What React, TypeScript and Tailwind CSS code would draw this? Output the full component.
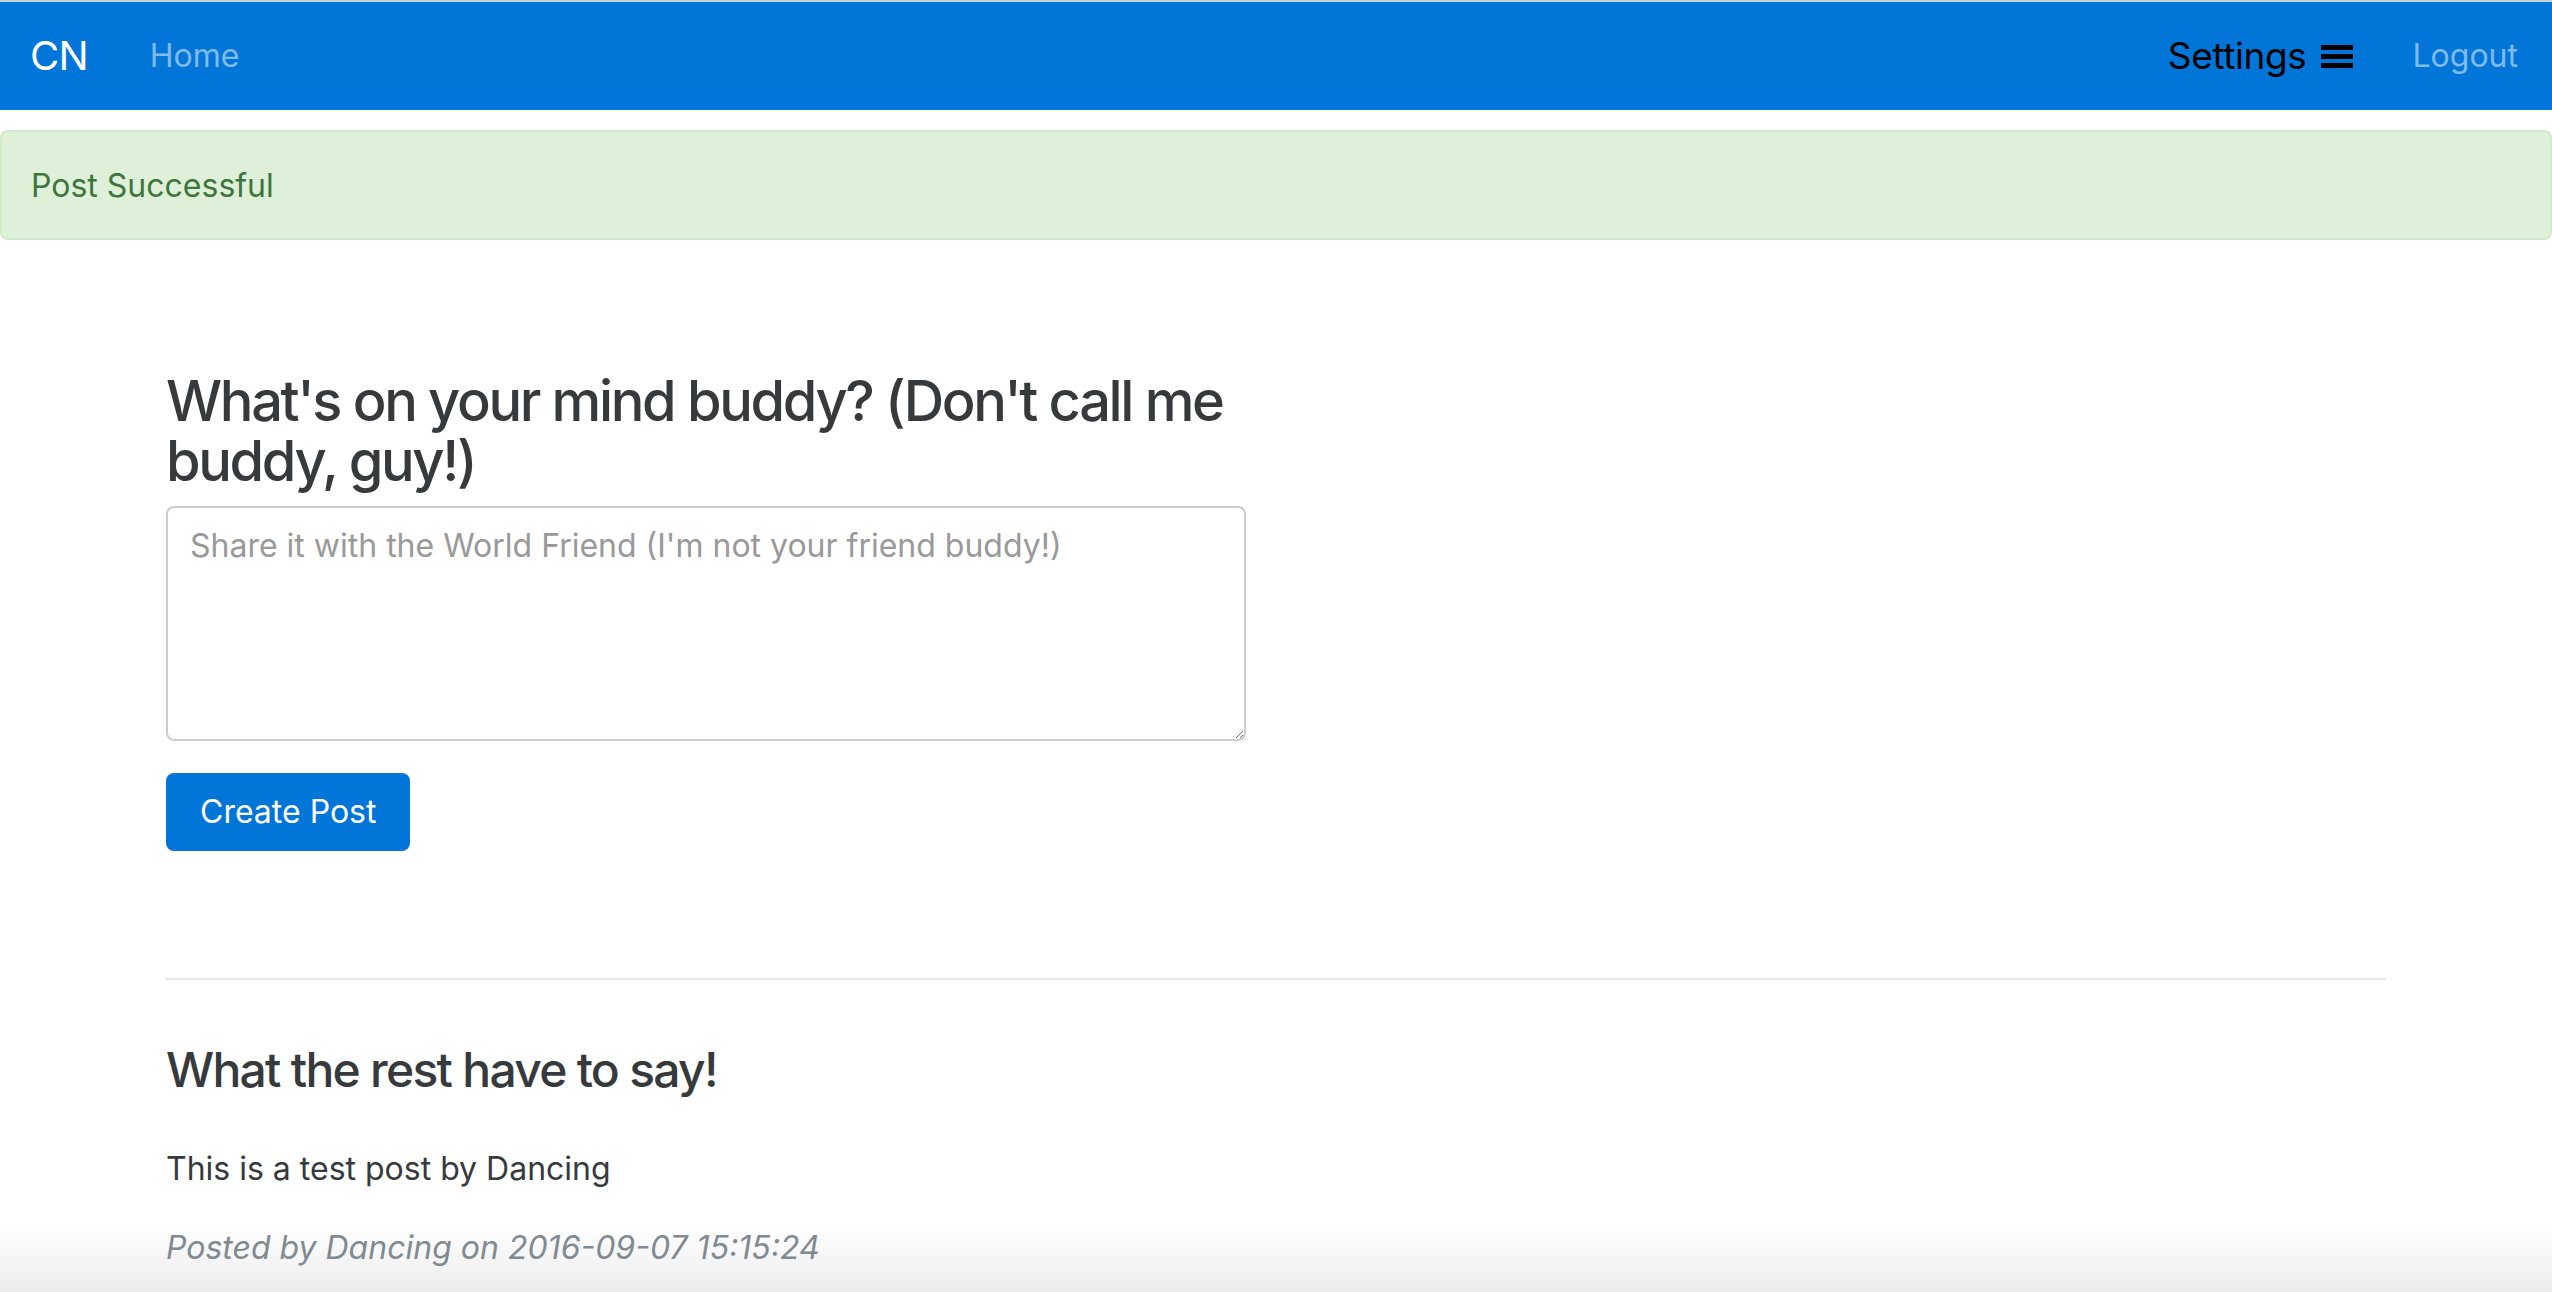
import React from 'react';

const FONT = "font-['Inter','Liberation_Sans',sans-serif]";

function Bars() {
  return (
    <svg width="32" height="28" viewBox="0 0 32 28" className="ml-[14px]" aria-hidden="true">
      <rect x="0" y="3" width="32" height="5" fill="currentColor" />
      <rect x="0" y="12" width="32" height="5" fill="currentColor" />
      <rect x="0" y="21" width="32" height="5" fill="currentColor" />
    </svg>
  );
}

function Navbar() {
  return (
    <>
      <div className="h-[2px] bg-[#c9d2da]" />
      <nav className="flex h-[108px] items-center bg-[#0275d8] pl-[30px] pr-[34px]">
        <a className="text-[40px] leading-[48px] tracking-[-0.02em] text-white">CN</a>
        <a className="ml-[62px] text-[32px] leading-[48px] text-[#80baeb]">Home</a>
        <div className="ml-auto flex items-center text-[37px] leading-[48px] tracking-[-0.01em] text-black">
          Settings
          <Bars />
        </div>
        <a className="ml-[60px] text-[32px] leading-[48px] text-[#80baeb]">Logout</a>
      </nav>
    </>
  );
}

export default function App() {
  return (
    <div
      className={`${FONT} h-[1292px] overflow-hidden bg-[linear-gradient(to_bottom,#ffffff_1225px,#ececec)] text-[#373a3c]`}
    >
      <Navbar />

      <div className="mt-[20px] rounded-[8px] border-2 border-[#d0e9c6] bg-[#dff0d8] py-[29px] pl-[29px] text-[32px] leading-[48px] text-[#3c763d]">
        <span className="relative top-[1px]">Post Successful</span>
      </div>

      <div className="mx-auto max-w-[2280px] px-[30px]">
        <div className="flex">
          <div className="w-[1080px] pt-[131px]">
            <h3 className="mb-[15px] text-[56px] font-medium leading-[60px] tracking-[-0.042em]">
              What's on your mind buddy? (Don't call me buddy, guy!)
            </h3>
            <textarea
              rows={4}
              placeholder="Share it with the World Friend (I'm not your friend buddy!)"
              className="block h-[235px] w-full resize-y rounded-[8px] border-2 border-[#cccccc] px-[22px] py-[14px] text-[32px] leading-[48px] text-[#55595c] outline-none placeholder:text-[#999999]"
            />
            <button className="mt-[32px] rounded-[8px] border-2 border-[#0275d8] bg-[#0275d8] px-[32px] py-[13px] text-[32px] leading-[48px] text-white">
              Create Post
            </button>
          </div>
        </div>

        <hr className="mt-[127px] border-t-2 border-[#e6e6e6]" />

        <h4 className="mt-[64px] text-[48px] font-medium leading-[1.1] tracking-[-0.036em]">
          What the rest have to say!
        </h4>

        <p className="mt-[48px] text-[32px] leading-[48px]">This is a test post by Dancing</p>
        <p className="mt-[31px] text-[32px] italic leading-[48px] text-[#818a91]">
          Posted by Dancing on 2016-09-07 15:15:24
        </p>
      </div>
    </div>
  );
}
